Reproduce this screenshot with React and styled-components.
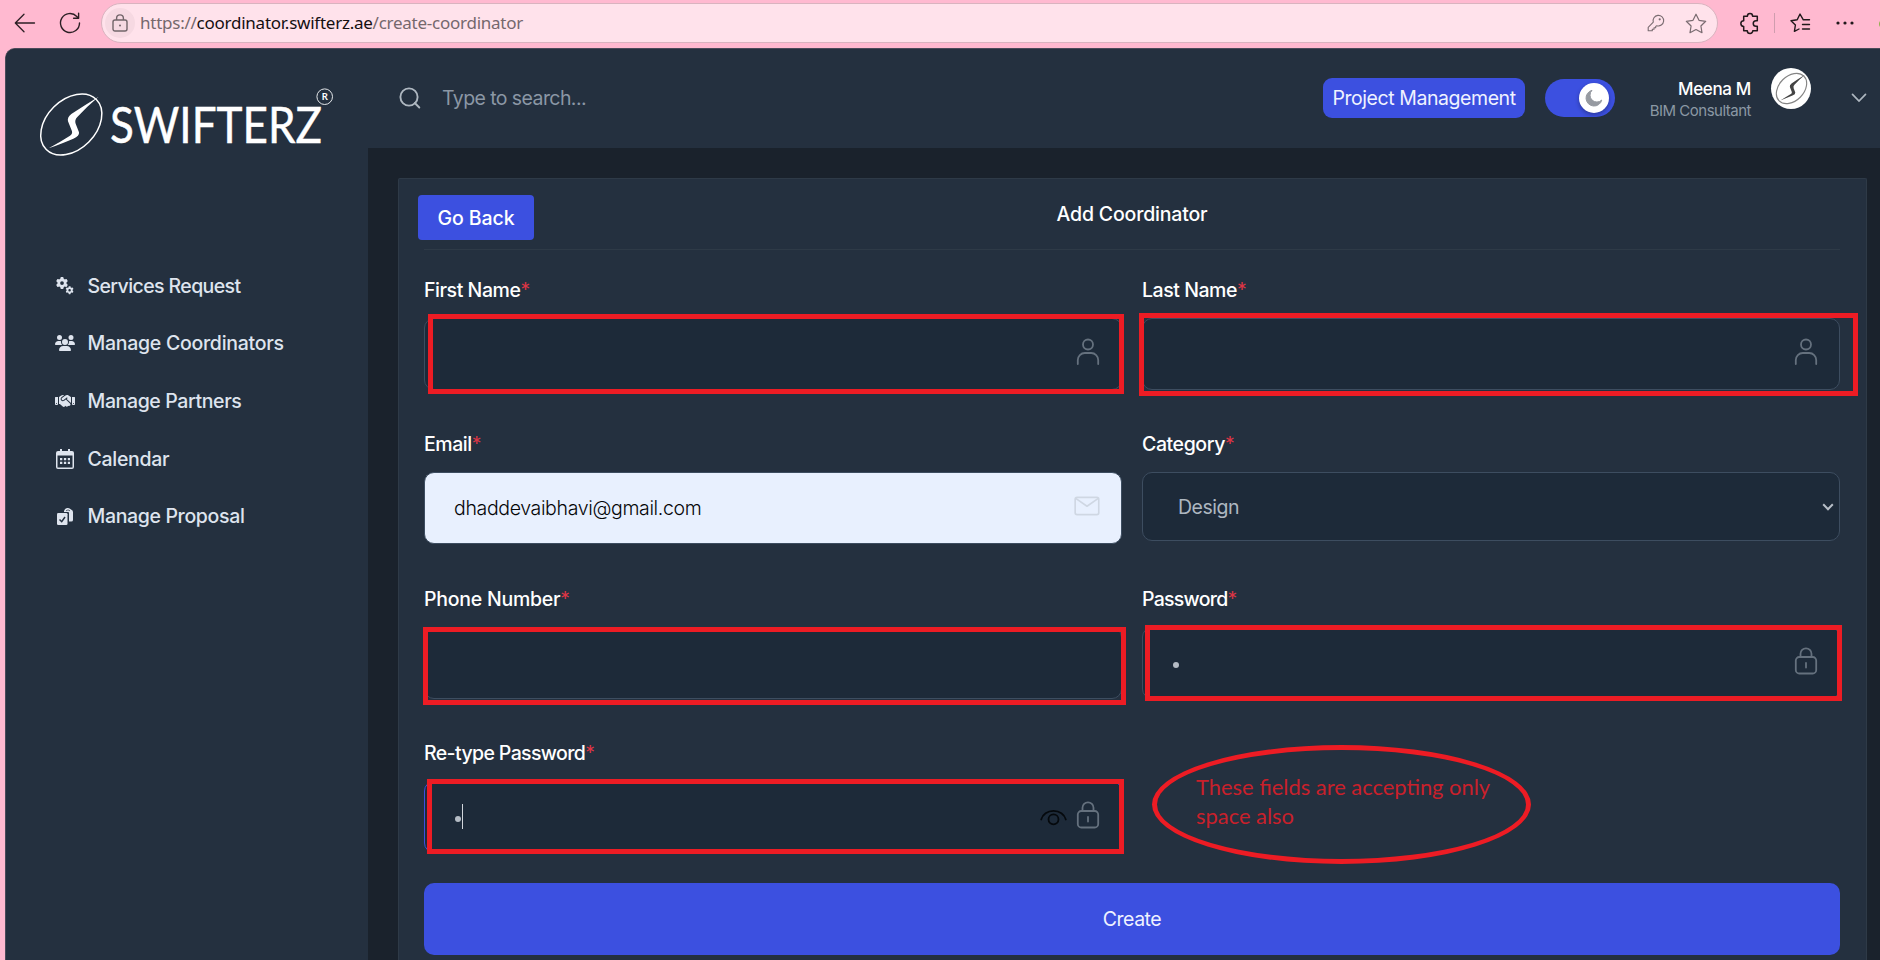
import React from "react";
import styled, { createGlobalStyle } from "styled-components";
import { FaGear, FaUsers, FaHandshake } from "react-icons/fa6";

const GlobalStyle = createGlobalStyle`
  * { box-sizing: border-box; }
  body {
    margin: 0;
    overflow: hidden;
    background: #ffb9d0;
    font-family: Inter, "Open Sans", sans-serif;
  }
  svg { display: block; overflow: visible; }
`;

const Window = styled.div`
  position: relative;
  width: 1880px;
  height: 960px;
  overflow: hidden;
  display: flex;
  flex-direction: column;
  background: #ffb9d0;
`;

/* ---------- browser bar ---------- */

const BrowserBar = styled.div`
  height: 48px;
  flex: none;
  display: flex;
  align-items: center;
  padding: 0 0 3px 14px;
`;

const ReloadSlot = styled.div`
  margin-left: 23px;
`;

const AddressBar = styled.div`
  width: 1617px;
  height: 40px;
  margin: 1px 0 0 20px;
  padding: 0 10px 0 3px;
  border: 1px solid #d9b3bf;
  border-radius: 20px;
  background: #ffe2eb;
  display: flex;
  align-items: center;
`;

const SiteBadge = styled.div`
  width: 30px;
  height: 30px;
  border-radius: 50%;
  background: #f6d9e2;
  display: flex;
  align-items: center;
  justify-content: center;
`;

const Url = styled.div`
  flex: 1;
  margin: 0 0 1px 5px;
  font-family: "Noto Sans", "Open Sans", sans-serif;
  font-size: 17px;
  letter-spacing: -0.25px;
  color: #75686d;
  white-space: nowrap;
`;

const Host = styled.span`
  color: #140f11;
`;

const AddressIcons = styled.div`
  display: flex;
  gap: 20px;
  align-items: center;
`;

const BrowserActions = styled.div`
  display: flex;
  align-items: center;
  margin-left: 22px;
  padding-top: 1px;
`;

const Separator = styled.div`
  width: 1px;
  height: 20px;
  margin: 0 15px 0 14px;
  background: #cf9dae;
`;

const DotsSlot = styled.div`
  margin-left: 25px;
`;

const ProfileEdge = styled.div`
  position: absolute;
  left: 1879px;
  top: 19px;
  width: 10px;
  height: 10px;
  border-radius: 5px;
  background: #8fae4a;
`;

/* ---------- application shell ---------- */

const Shell = styled.div`
  flex: 1;
  min-height: 0;
  margin-left: 5px;
  display: flex;
  overflow: hidden;
  border-top: 1px solid #4b4a59;
  border-left: 1px solid #4b4a59;
  border-top-left-radius: 10px;
  background: #1a222c;
`;

const Sidebar = styled.aside`
  width: 362px;
  flex: none;
  background: #24303f;
`;

const LogoSlot = styled.div`
  padding: 32px 0 0 28px;
`;

const Nav = styled.nav`
  display: flex;
  flex-direction: column;
  margin-top: 81px;
  padding-left: 49px;
`;

const NavItem = styled.a`
  height: 57.6px;
  display: flex;
  align-items: center;
  gap: 12.5px;
  color: #dee4ee;
  font-size: 19.5px;
  font-weight: 500;
  letter-spacing: ${(p) => p.$track};
  white-space: nowrap;
`;

const NavIcon = styled.span`
  width: 20px;
  display: flex;
  justify-content: center;
`;

const Content = styled.div`
  flex: 1;
  min-width: 0;
  display: flex;
  flex-direction: column;
`;

const Header = styled.header`
  height: 99px;
  flex: none;
  display: flex;
  align-items: center;
  padding: 0 13px 2px 31px;
  background: #24303f;
`;

const SearchText = styled.div`
  flex: 1;
  margin-left: 21px;
  font-size: 19.5px;
  letter-spacing: -0.58px;
  color: #8b97a5;
`;

const ProjectButton = styled.button`
  width: 202px;
  height: 40px;
  border: 0;
  padding: 0;
  border-radius: 9px;
  background: #3c50e0;
  color: #eff2ff;
  font: 400 19.5px Inter, sans-serif;
  letter-spacing: -0.43px;
  white-space: nowrap;
`;

const Toggle = styled.div`
  width: 70px;
  height: 38px;
  margin-left: 20px;
  padding-right: 6px;
  border-radius: 19px;
  background: #3c50e0;
  display: flex;
  align-items: center;
  justify-content: flex-end;
`;

const Knob = styled.div`
  width: 30px;
  height: 30px;
  border-radius: 50%;
  background: #fff;
  box-shadow: 0 2px 4px rgba(0, 0, 0, 0.3);
  display: flex;
  align-items: center;
  justify-content: center;
`;

const UserText = styled.div`
  width: 136px;
  padding-top: 4px;
  text-align: right;
`;

const UserName = styled.div`
  font-size: 17px;
  line-height: 22px;
  font-weight: 500;
  letter-spacing: -0.35px;
  color: #fff;
`;

const UserRole = styled.div`
  font-size: 15px;
  line-height: 21px;
  letter-spacing: -0.5px;
  color: #8b98a4;
`;

const Avatar = styled.div`
  width: 40px;
  height: 41px;
  margin: 0 40px 18px 20px;
  border-radius: 50%;
  background: #fff;
  display: flex;
  align-items: center;
  justify-content: center;
`;

/* ---------- form ---------- */

const Card = styled.main`
  flex: 1;
  margin: 30px 13px 0 30px;
  padding: 16px 26px 0 25px;
  border: 1px solid #2e3a47;
  border-bottom: 0;
  border-radius: 2px 2px 0 0;
  background: #24303f;
`;

const CardHead = styled.div`
  display: grid;
  grid-template-columns: 1fr auto 1fr;
  height: 55px;
  border-bottom: 1px solid #2e3a47;
`;

const BackButton = styled.button`
  width: 116px;
  height: 45px;
  margin-left: -6px;
  padding: 0;
  border: 0;
  border-radius: 4px;
  background: #3c50e0;
  color: #fff;
  font: 500 19.5px Inter, sans-serif;
  letter-spacing: -0.05px;
`;

const Title = styled.h1`
  margin: 6px 0 0;
  font-size: 19.5px;
  line-height: 26px;
  font-weight: 500;
  letter-spacing: -0.17px;
  color: #fff;
`;

const Fields = styled.form`
  display: grid;
  grid-template-columns: 1fr 1fr;
  column-gap: 20px;
  row-gap: 39.3px;
  padding-top: 25px;
`;

const Field = styled.div`
  height: 115px;
`;

const Label = styled.label`
  display: block;
  height: 30px;
  margin-bottom: 13px;
  font-size: 19.5px;
  line-height: 31px;
  font-weight: 500;
  letter-spacing: ${(p) => p.$track};
  color: #fff;
`;

const Required = styled.span`
  color: #dc3545;
  font-weight: 400;
`;

const Control = styled.div`
  height: ${(p) => (p.$short ? "69px" : "72px")};
  padding: ${(p) => (p.$short ? "0 5px 0 35px" : "0 21px 0 29px")};
  display: flex;
  align-items: center;
  border: 1px solid ${(p) => (p.$active ? "#3c50e0" : "#3d4d60")};
  border-radius: 10px;
  background: ${(p) => (p.$filled ? "#e8f0fe" : "#1d2a39")};
  color: ${(p) => (p.$filled ? "#050608" : "#aeb7c0")};
  font-size: 19.5px;
  font-weight: ${(p) => (p.$filled ? 300 : 400)};
  letter-spacing: ${(p) => (p.$short ? "-0.5px" : "-0.35px")};
`;

const Value = styled.span`
  flex: 1;
  display: flex;
  align-items: center;
`;

const PasswordDot = styled.span`
  width: 6px;
  height: 6px;
  margin: 5px 0 0 1px;
  border-radius: 50%;
  background: #b5bcc5;
`;

const Caret = styled.span`
  width: 1px;
  height: 25px;
  margin-left: 1px;
  background: #d0d5db;
`;

const FieldIcon = styled.span`
  margin-bottom: 4px;
`;

const EyeSlot = styled.span`
  margin-right: 9px;
`;

const SubmitButton = styled.button`
  display: block;
  width: 100%;
  height: 72px;
  margin-top: 30px;
  border: 0;
  border-radius: 10px;
  background: #3c50e0;
  color: #eff2ff;
  font: 400 19.5px Inter, sans-serif;
  letter-spacing: -0.5px;
`;

/* ---------- review marks lying over the page ---------- */

const MarkBox = styled.div`
  position: absolute;
  left: ${(p) => p.$x}px;
  top: ${(p) => p.$y}px;
  width: ${(p) => p.$w}px;
  height: ${(p) => p.$h}px;
  border: 5px solid #ed1c24;
`;

const MarkEllipse = styled.div`
  position: absolute;
  left: 1152px;
  top: 745px;
  width: 379px;
  height: 119px;
  border: 5px solid #ed1c24;
  border-radius: 50%;
`;

const MarkNote = styled.div`
  position: absolute;
  left: 1196px;
  top: 772px;
  font-family: Lato, sans-serif;
  font-size: 21.9px;
  line-height: 29.3px;
  white-space: nowrap;
  color: #c9202b;
`;

const SWOOSH =
  "M236 80Q190 108 154 132Q141 142 144 154L156 184Q158 192 150 197Q120 216 86 235Q130 219 160 206Q179 198 177 187L167 161Q163 150 172 141Q200 110 236 80Z";

const Logo = () => (
  <svg width="310" height="95" viewBox="34 81 310 95">
    <ellipse cx="71.3" cy="124.5" rx="35.4" ry="24.8" transform="rotate(-45 71.3 124.5)" fill="none" stroke="#fff" strokeWidth="1.5" />
    <path d={SWOOSH} transform="translate(20 70) scale(0.3333)" fill="#fff" />
    <text x="110" y="143.2" textLength="212" lengthAdjust="spacingAndGlyphs" fontFamily="Lato, sans-serif" fontSize="50.5" fill="#fff" stroke="#fff" strokeWidth="0.5">SWIFTERZ</text>
    <circle cx="324.7" cy="96.7" r="7.8" fill="none" stroke="#e4e7ea" strokeWidth="1" />
    <text x="324.9" y="100.1" textAnchor="middle" fontFamily="Lato, sans-serif" fontSize="9.5" fontWeight="700" fill="#fff">R</text>
  </svg>
);

const AvatarMark = () => (
  <svg width="33" height="33" viewBox="54 63 200 200" fill="none">
    <ellipse cx="154" cy="163" rx="106" ry="75" transform="rotate(-45 154 163)" stroke="#858585" strokeWidth="7" />
    <path d={SWOOSH} fill="#444" />
  </svg>
);

const BackIcon = () => (
  <svg width="22" height="20" viewBox="0 0 22 20" fill="none" stroke="#2c1f24" strokeWidth="1.3" strokeLinecap="round" strokeLinejoin="round">
    <path d="M20.5 10H1.5M10 1.2 1.3 10l8.7 8.8" />
  </svg>
);

const ReloadIcon = () => (
  <svg width="22" height="22" viewBox="0 0 22 22" fill="none" stroke="#2c1f24" strokeWidth="1.4" strokeLinecap="round" strokeLinejoin="round">
    <path d="M20.5 11A9.5 9.5 0 1 1 17.8 4.4L19.5 6M19.6 1.2V6.2H14.6" />
  </svg>
);

const SiteLockIcon = () => (
  <svg width="16" height="18" viewBox="0 0 16 18" fill="none" stroke="#72656a" strokeWidth="1.4">
    <rect x="1" y="6" width="14" height="11" rx="2" />
    <path d="M4.6 6V4.3a3.4 3.4 0 0 1 6.8 0V6" />
    <circle cx="8" cy="11.5" r="1" fill="#72656a" stroke="none" />
  </svg>
);

const KeyIcon = () => (
  <svg width="18" height="18" viewBox="0 0 18 18" fill="none" stroke="#7a6c71" strokeWidth="1.1" strokeLinejoin="round">
    <path d="M6.3 8.2A5.3 5.3 0 1 1 9.8 11.7L8.7 12.4V13.7H7V15.3H5.3V16.7H1.2V13.3Z" />
    <circle cx="12.7" cy="5.3" r="1.1" fill="#7a6c71" stroke="none" />
  </svg>
);

const StarIcon = () => (
  <svg width="22" height="21" viewBox="0 0 22 21" fill="none" stroke="#7a6c71" strokeWidth="1.2" strokeLinejoin="round">
    <path d="M11 1.2 14 7.3 20.7 8.3 15.9 13 17 19.7 11 16.5 5 19.7 6.1 13 1.3 8.3 8 7.3Z" />
  </svg>
);

const PuzzleIcon = () => (
  <svg width="20" height="21" viewBox="0 0 20 21" fill="none" stroke="#21181b" strokeWidth="1.5" strokeLinejoin="round">
    <path d="M3.7 3.2H7.4A2.6 2.6 0 0 1 12.6 3.2H17.3V7.7H16A2.7 2.7 0 0 0 16 13.2H17.3V17.7H12.8A2.6 2.6 0 0 1 7.3 17.7H3.7V13.4A2.7 2.7 0 0 1 3.7 7.7Z" />
  </svg>
);

const FavoritesIcon = () => (
  <svg width="21" height="20" viewBox="0 0 21 20" fill="none" stroke="#21181b" strokeWidth="1.4" strokeLinejoin="round" strokeLinecap="round">
    <path d="M13.3 6.8 10 1 7.2 6.7 1 7.7 5.4 12 4.4 18.4 9 16M13.3 6.8H19.5M12.5 11.5H19.5M12.5 16H19.5" />
  </svg>
);

const DotsIcon = () => (
  <svg width="18" height="4" viewBox="0 0 18 4" fill="#21181b">
    <circle cx="2" cy="2" r="1.6" />
    <circle cx="9" cy="2" r="1.6" />
    <circle cx="16" cy="2" r="1.6" />
  </svg>
);

const GearsIcon = () => (
  <svg width="18" height="18" viewBox="0 0 18 18">
    <FaGear x="0" y="0" size={12} />
    <FaGear x="9.6" y="9.2" size={8} />
  </svg>
);

const CalendarIcon = () => (
  <svg width="18" height="20" viewBox="0 0 18 20" fill="#dee4ee">
    <path fillRule="evenodd" d="M4 0H6V2H12V0H14V2H16A2 2 0 0 1 18 4V18A2 2 0 0 1 16 20H2A2 2 0 0 1 0 18V4A2 2 0 0 1 2 2H4ZM1.5 6.5V18.5H16.5V6.5Z" />
    <path d="M4 9H6.3V11.3H4ZM7.9 9H10.2V11.3H7.9ZM11.8 9H14V11.3H11.8ZM4 12.8H6.3V15H4ZM7.9 12.8H10.2V15H7.9ZM11.8 12.8H14V15H11.8Z" />
  </svg>
);

const ProposalIcon = () => (
  <svg width="16" height="17" viewBox="0 0 16 17" fill="#dee4ee">
    <path d="M7 3A4 4 0 0 1 14 1.5Q16 2 16 4V12Q16 13.5 14.3 13.5H12V5Q12 4 11 4H7Z" />
    <rect y="5" width="10.5" height="12" rx="1.3" />
    <path d="M2.5 11.5 4.7 13.7 8 9" fill="none" stroke="#24303f" strokeWidth="1.5" />
    <path d="M9 2.8Q11 1 13 2.8" fill="none" stroke="#24303f" strokeWidth="0.7" />
  </svg>
);

const SearchIcon = () => (
  <svg width="22" height="22" viewBox="0 0 22 22" fill="none" stroke="#aeb7c0" strokeWidth="1.9">
    <circle cx="10" cy="10" r="8.6" />
    <path d="M15.8 16 20.3 20.5" strokeLinecap="round" />
  </svg>
);

const MoonIcon = () => (
  <svg width="18" height="18" viewBox="0 0 18 18" fill="#969aa1">
    <path d="M7 1.3A8 8 0 1 0 16.8 11 6.6 6.6 0 0 1 7 1.3Z" stroke="#969aa1" strokeWidth="1" strokeLinejoin="round" />
  </svg>
);

const MenuChevron = () => (
  <svg width="16" height="10" viewBox="0 0 16 10" fill="none" stroke="#aeb7c0" strokeWidth="1.7" strokeLinecap="round">
    <path d="M1.5 1.3 8 8 14.5 1.3" />
  </svg>
);

const SelectChevron = () => (
  <svg width="12" height="8" viewBox="0 0 12 8" fill="none" stroke="#b7bec7" strokeWidth="2">
    <path d="M1.2 1.3 6 6.2 10.8 1.3" />
  </svg>
);

const PersonIcon = () => (
  <svg width="24" height="28" viewBox="0 0 24 28" fill="none" stroke="#65717e" strokeWidth="1.8" strokeLinecap="round">
    <circle cx="12" cy="6.5" r="5" />
    <path d="M1.8 26V22A7 7 0 0 1 8.8 15H15.2A7 7 0 0 1 22.2 22V26" />
  </svg>
);

const MailIcon = () => (
  <svg width="26" height="20" viewBox="0 0 27 20" fill="none" stroke="#cfd7e3" strokeWidth="1.7" strokeLinejoin="round">
    <rect x="1.2" y="1" width="24.5" height="18" rx="2" />
    <path d="M1.8 2 13.5 10.3 25.2 2" />
  </svg>
);

const LockIcon = () => (
  <svg width="24" height="28" viewBox="0 0 24 28" fill="none" stroke="#65717e" strokeWidth="1.8" strokeLinecap="round">
    <rect x="1.8" y="10" width="20.4" height="16.5" rx="3.5" />
    <path d="M6.5 10V6.8A5.5 5.5 0 0 1 17.5 6.8V10M12 16V20.5" />
  </svg>
);

const EyeIcon = () => (
  <svg width="27" height="18" viewBox="0 0 27 18" fill="none" stroke="#05090d" strokeWidth="1.8" strokeLinecap="round">
    <path d="M1.2 11.5A12.6 11 0 0 1 25.8 11.5" />
    <circle cx="13.5" cy="11.3" r="5" />
  </svg>
);

const NAV = [
  { label: "Services Request", icon: <GearsIcon />, track: "-0.6px" },
  { label: "Manage Coordinators", icon: <FaUsers size={20} />, track: "-0.28px" },
  { label: "Manage Partners", icon: <FaHandshake size={20} />, track: "-0.38px" },
  { label: "Calendar", icon: <CalendarIcon />, track: "-0.3px" },
  { label: "Manage Proposal", icon: <ProposalIcon />, track: "-0.35px" },
];

const FieldLabel = ({ children, track = "-0.45px" }) => (
  <Label $track={track}>
    {children}
    <Required>*</Required>
  </Label>
);

export default function App() {
  return (
    <Window>
      <GlobalStyle />
      <BrowserBar>
        <BackIcon />
        <ReloadSlot><ReloadIcon /></ReloadSlot>
        <AddressBar>
          <SiteBadge><SiteLockIcon /></SiteBadge>
          <Url>https://<Host>coordinator.swifterz.ae</Host>/create-coordinator</Url>
          <AddressIcons>
            <KeyIcon />
            <StarIcon />
          </AddressIcons>
        </AddressBar>
        <BrowserActions>
          <PuzzleIcon />
          <Separator />
          <FavoritesIcon />
          <DotsSlot><DotsIcon /></DotsSlot>
        </BrowserActions>
        <ProfileEdge />
      </BrowserBar>

      <Shell>
        <Sidebar>
          <LogoSlot><Logo /></LogoSlot>
          <Nav>
            {NAV.map((item) => (
              <NavItem key={item.label} $track={item.track}>
                <NavIcon>{item.icon}</NavIcon>
                {item.label}
              </NavItem>
            ))}
          </Nav>
        </Sidebar>

        <Content>
          <Header>
            <SearchIcon />
            <SearchText>Type to search...</SearchText>
            <ProjectButton>Project Management</ProjectButton>
            <Toggle><Knob><MoonIcon /></Knob></Toggle>
            <UserText>
              <UserName>Meena M</UserName>
              <UserRole>BIM Consultant</UserRole>
            </UserText>
            <Avatar><AvatarMark /></Avatar>
            <MenuChevron />
          </Header>

          <Card>
            <CardHead>
              <BackButton>Go Back</BackButton>
              <Title>Add Coordinator</Title>
            </CardHead>
            <Fields>
              <Field>
                <FieldLabel>First Name</FieldLabel>
                <Control><Value /><FieldIcon><PersonIcon /></FieldIcon></Control>
              </Field>
              <Field>
                <FieldLabel>Last Name</FieldLabel>
                <Control><Value /><FieldIcon><PersonIcon /></FieldIcon></Control>
              </Field>
              <Field>
                <FieldLabel>Email</FieldLabel>
                <Control $filled><Value>dhaddevaibhavi@gmail.com</Value><FieldIcon><MailIcon /></FieldIcon></Control>
              </Field>
              <Field>
                <FieldLabel track="-0.4px">Category</FieldLabel>
                <Control $short><Value>Design</Value><SelectChevron /></Control>
              </Field>
              <Field>
                <FieldLabel track="-0.25px">Phone Number</FieldLabel>
                <Control />
              </Field>
              <Field>
                <FieldLabel track="-0.72px">Password</FieldLabel>
                <Control><Value><PasswordDot /></Value><FieldIcon><LockIcon /></FieldIcon></Control>
              </Field>
              <Field>
                <FieldLabel track="-0.62px">Re-type Password</FieldLabel>
                <Control $active>
                  <Value><PasswordDot /><Caret /></Value>
                  <EyeSlot><EyeIcon /></EyeSlot>
                  <FieldIcon><LockIcon /></FieldIcon>
                </Control>
              </Field>
            </Fields>
            <SubmitButton>Create</SubmitButton>
          </Card>
        </Content>
      </Shell>

      <MarkBox $x={428} $y={314} $w={696} $h={80} />
      <MarkBox $x={1139} $y={313} $w={719} $h={83} />
      <MarkBox $x={423} $y={627} $w={703} $h={78} />
      <MarkBox $x={1145} $y={625} $w={697} $h={76} />
      <MarkBox $x={427} $y={779} $w={697} $h={75} />
      <MarkEllipse />
      <MarkNote>These fields are accepting only<br />space also</MarkNote>
    </Window>
  );
}
